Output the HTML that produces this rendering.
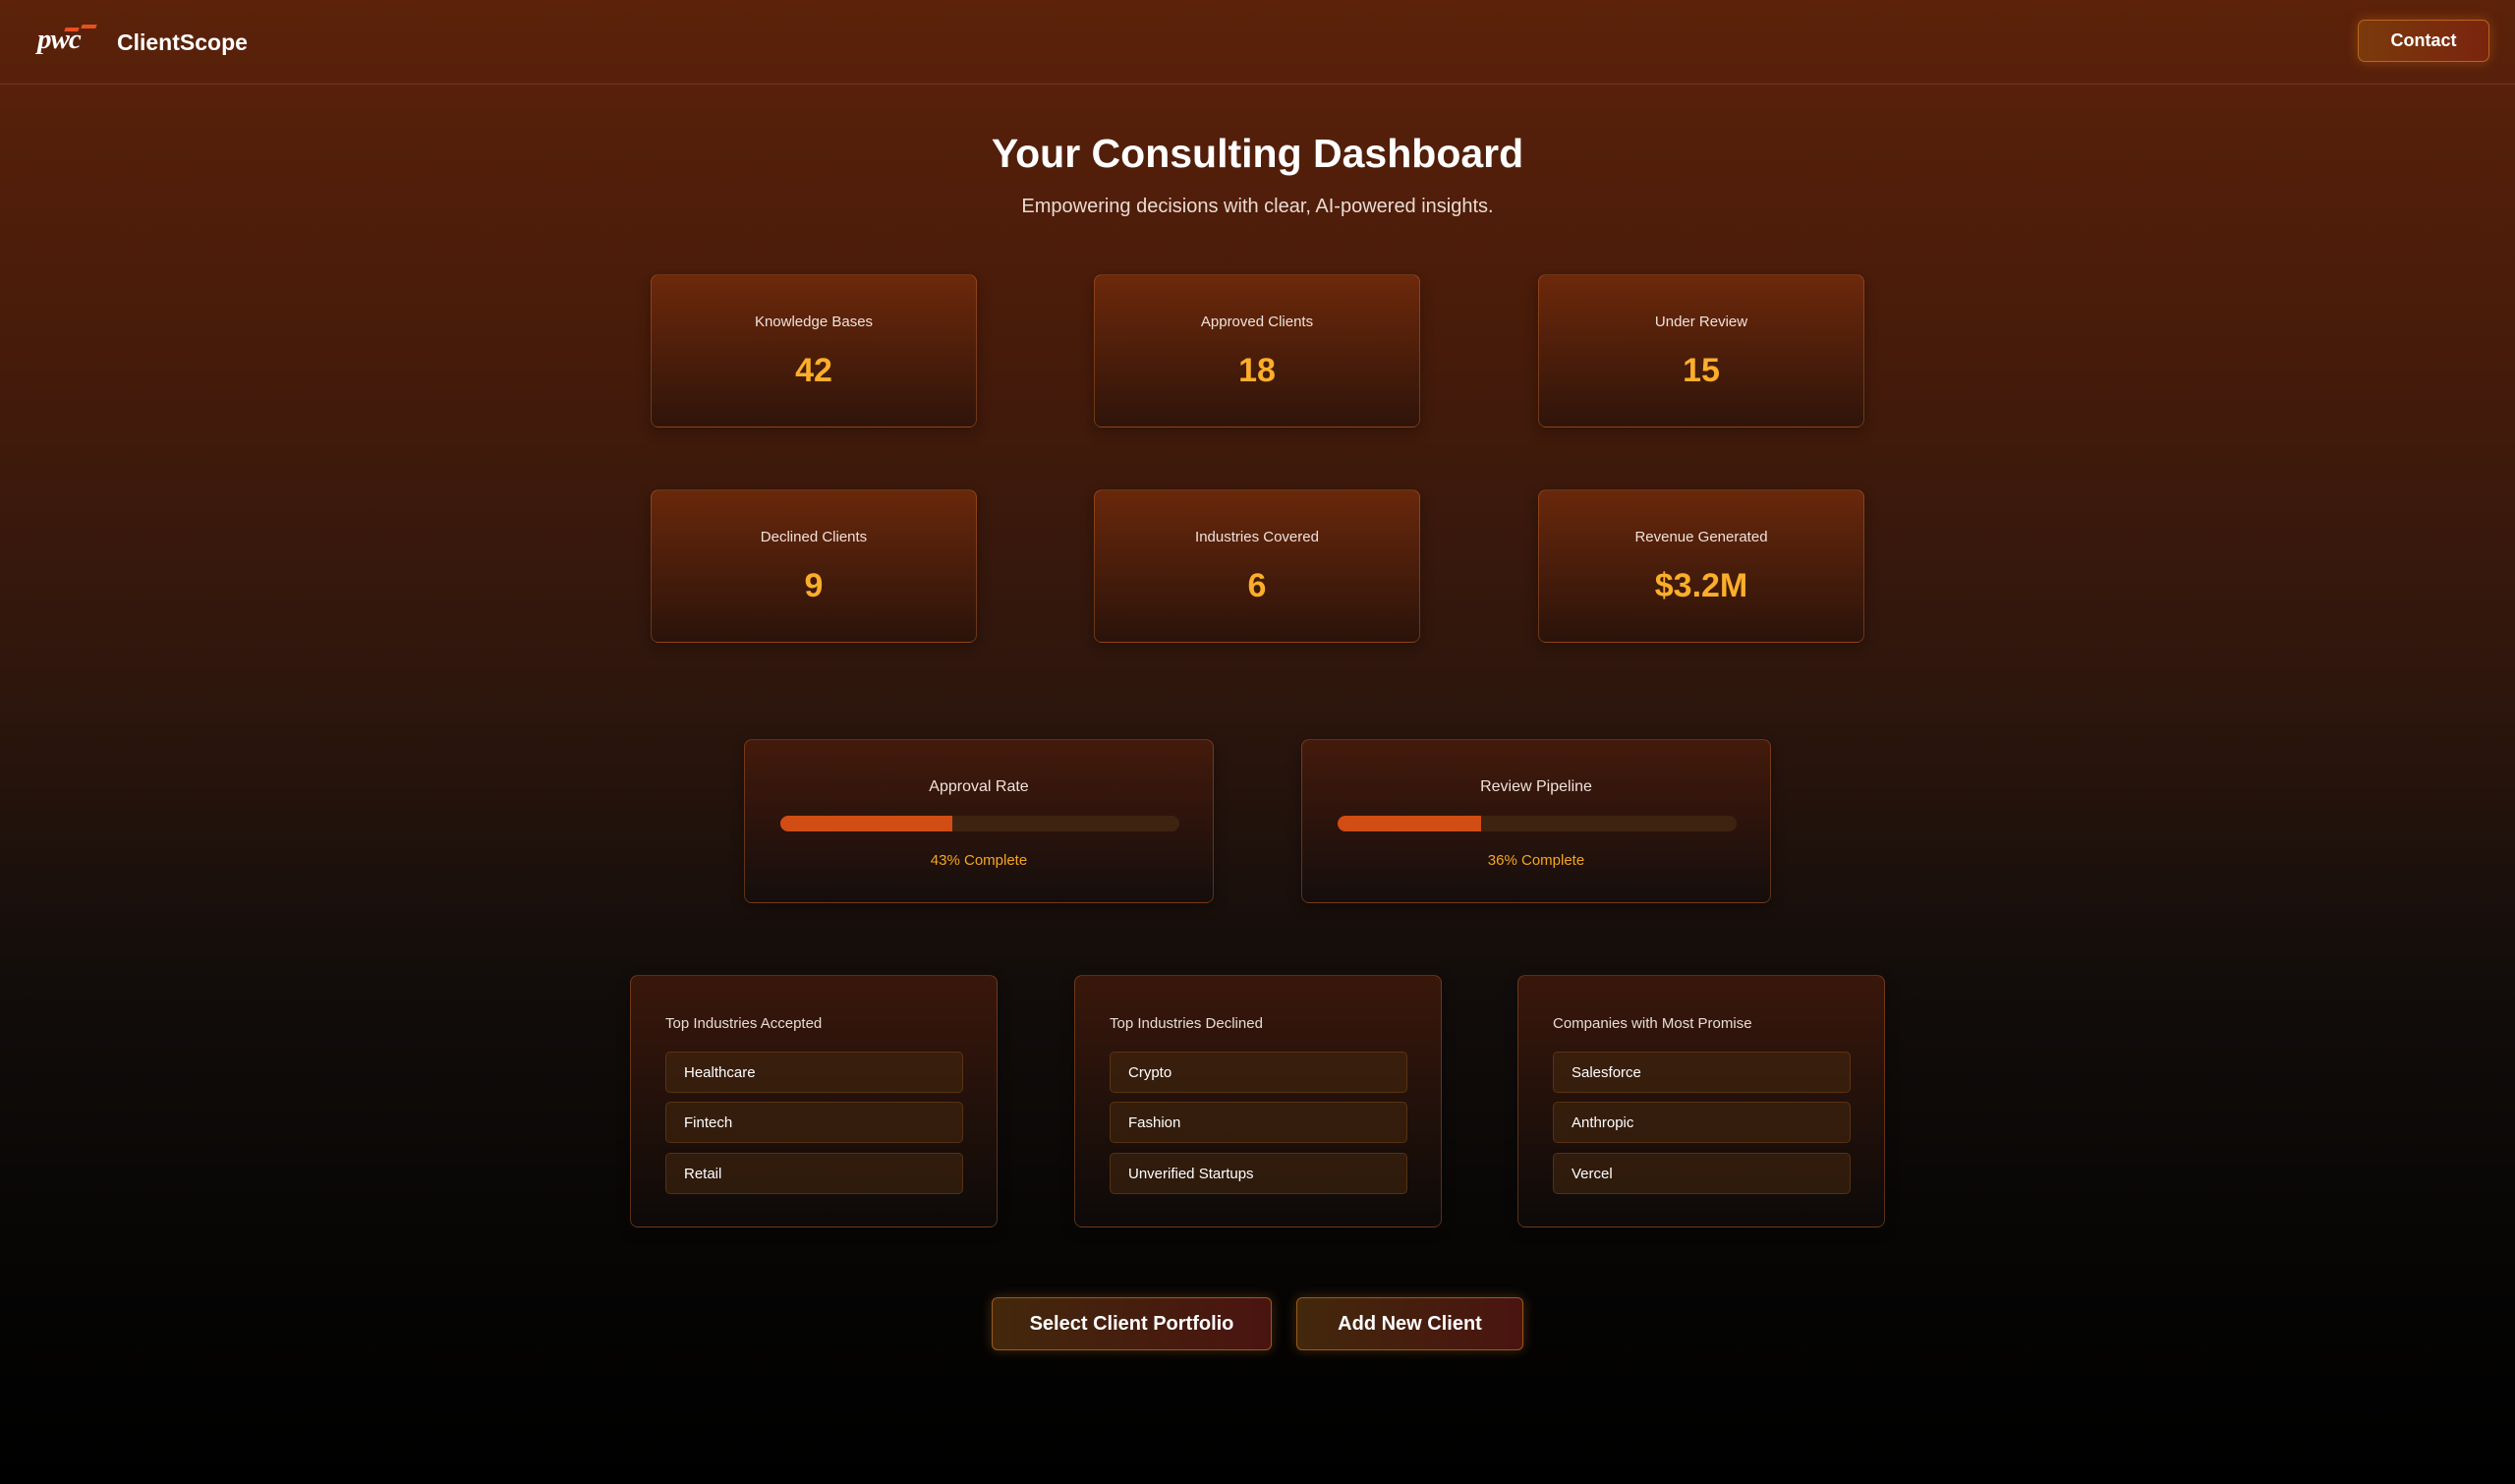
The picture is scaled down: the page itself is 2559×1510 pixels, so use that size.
<!DOCTYPE html>
<html><head><meta charset="utf-8">
<style>
*{box-sizing:border-box;margin:0;padding:0}
html,body{width:2559px;height:1510px;overflow:hidden}
body{font-family:"Liberation Sans",sans-serif;color:#fff;position:relative;
background:linear-gradient(180deg,#5c220a 0px,#4a1c0a 300px,#2e160d 700px,#120d0b 1000px,#060504 1300px,#000 1510px);}
.hdr{position:absolute;left:0;top:0;width:2559px;height:86px;border-bottom:1px solid rgba(200,110,60,0.3)}
.logo{position:absolute;left:38px;top:24px;font-family:"Liberation Serif",serif;font-style:italic;font-weight:bold;font-size:29px;color:#fff;letter-spacing:-1px}
.logo i{position:absolute;height:4px;background:#e8501e;transform:skewX(-20deg)}
.brand{position:absolute;left:119px;top:30px;font-size:23px;font-weight:bold}
.contact{position:absolute;left:2399px;top:20px;width:134px;height:43px;border-radius:7px;border:1.5px solid #b8661c;
background:linear-gradient(90deg,#7a3a0c,#7a240e);display:flex;align-items:center;justify-content:center;font-size:18px;font-weight:bold;box-shadow:0 0 12px rgba(230,120,30,0.35)}
h1{position:absolute;left:0;width:2559px;top:133px;text-align:center;font-size:41px;font-weight:bold}
.sub{position:absolute;left:0;width:2559px;top:199px;text-align:center;font-size:20px;color:#eadbd2}
.card{position:absolute;border:1px solid rgba(220,120,50,0.35);border-radius:8px;
background:linear-gradient(180deg,rgba(120,45,12,0.75),rgba(40,18,10,0.7));box-shadow:0 4px 14px rgba(0,0,0,0.3)}
.stat{width:332px;height:156px;text-align:center}
.stat .l{position:absolute;top:39px;width:100%;font-size:15px;color:#efe2da}
.stat .n{position:absolute;top:78px;width:100%;font-size:34px;font-weight:bold;color:#fbae2a}
.prog{width:478px;height:167px;text-align:center;background:linear-gradient(180deg,rgba(75,28,12,0.8),rgba(20,14,12,0.8))}
.prog .l{position:absolute;top:39px;width:100%;font-size:16px;color:#efe2da}
.bar{position:absolute;left:36px;top:77px;width:406px;height:16px;border-radius:8px;background:#3e2410;overflow:hidden}
.bar b{display:block;height:100%;background:#d14d14}
.prog .p{position:absolute;top:114px;width:100%;font-size:15px;color:#f5a623}
.list{width:374px;height:257px;background:linear-gradient(180deg,rgba(65,26,12,0.85),rgba(14,11,10,0.9))}
.list .h{position:absolute;left:35px;top:40px;font-size:15px;color:#e8dcd4}
.it{position:absolute;left:35px;width:303px;height:42px;border:1px solid rgba(160,90,30,0.35);border-radius:5px;background:rgba(70,40,15,0.55);
font-size:15px;padding-left:18px;line-height:42px;color:#fff}
.btn{position:absolute;top:1320px;height:54px;border-radius:6px;border:1.5px solid #9a5a1c;background:linear-gradient(90deg,#43280c,#4a1410);
display:flex;align-items:center;justify-content:center;font-size:20px;font-weight:bold;box-shadow:0 0 12px rgba(220,130,40,0.3)}
</style></head><body>
<div class="hdr">
<div class="logo">pwc<i style="left:28px;top:4px;width:14px"></i><i style="left:45px;top:1px;width:15px"></i></div>
<div class="brand">ClientScope</div>
<div class="contact">Contact</div>
</div>
<h1>Your Consulting Dashboard</h1>
<div class="sub">Empowering decisions with clear, AI-powered insights.</div>

<div class="card stat" style="left:662px;top:279px"><div class="l">Knowledge Bases</div><div class="n">42</div></div>
<div class="card stat" style="left:1113px;top:279px"><div class="l">Approved Clients</div><div class="n">18</div></div>
<div class="card stat" style="left:1565px;top:279px"><div class="l">Under Review</div><div class="n">15</div></div>
<div class="card stat" style="left:662px;top:498px"><div class="l">Declined Clients</div><div class="n">9</div></div>
<div class="card stat" style="left:1113px;top:498px"><div class="l">Industries Covered</div><div class="n">6</div></div>
<div class="card stat" style="left:1565px;top:498px"><div class="l">Revenue Generated</div><div class="n">$3.2M</div></div>

<div class="card prog" style="left:757px;top:752px"><div class="l">Approval Rate</div><div class="bar"><b style="width:43%"></b></div><div class="p">43% Complete</div></div>
<div class="card prog" style="left:1324px;top:752px"><div class="l">Review Pipeline</div><div class="bar"><b style="width:36%"></b></div><div class="p">36% Complete</div></div>

<div class="card list" style="left:641px;top:992px"><div class="h">Top Industries Accepted</div>
<div class="it" style="top:77px">Healthcare</div><div class="it" style="top:128px">Fintech</div><div class="it" style="top:180px">Retail</div></div>
<div class="card list" style="left:1093px;top:992px"><div class="h">Top Industries Declined</div>
<div class="it" style="top:77px">Crypto</div><div class="it" style="top:128px">Fashion</div><div class="it" style="top:180px">Unverified Startups</div></div>
<div class="card list" style="left:1544px;top:992px"><div class="h">Companies with Most Promise</div>
<div class="it" style="top:77px">Salesforce</div><div class="it" style="top:128px">Anthropic</div><div class="it" style="top:180px">Vercel</div></div>

<div class="btn" style="left:1009px;width:285px">Select Client Portfolio</div>
<div class="btn" style="left:1319px;width:231px">Add New Client</div>
</body></html>
